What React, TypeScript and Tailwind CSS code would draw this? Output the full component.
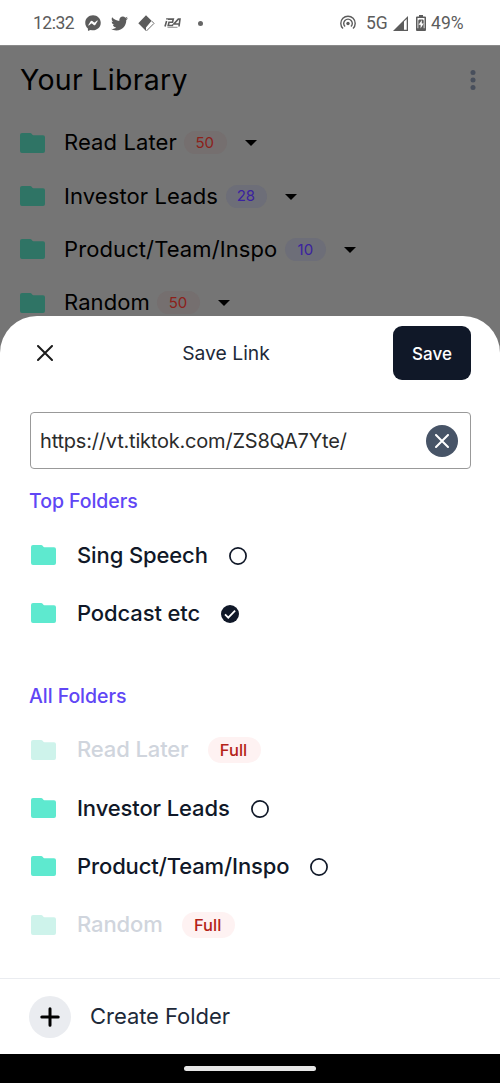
import { FaFacebookMessenger, FaTwitter } from 'react-icons/fa';

const libraryFolders = [
  { name: 'Read Later', count: 50, full: true },
  { name: 'Investor Leads', count: 28, full: false },
  { name: 'Product/Team/Inspo', count: 10, full: false },
  { name: 'Random', count: 50, full: true },
];

const topFolders = [
  { name: 'Sing Speech', state: 'empty' },
  { name: 'Podcast etc', state: 'checked' },
];

const allFolders = [
  { name: 'Read Later', state: 'full' },
  { name: 'Investor Leads', state: 'empty' },
  { name: 'Product/Team/Inspo', state: 'empty' },
  { name: 'Random', state: 'full' },
];

function FolderIcon({ className }: { className: string }) {
  return (
    <svg width="25" height="20" viewBox="0 0 25 20" fill="currentColor" className={className}>
      <path d="M2 0h8.2c.6 0 .9.2 1.2.6l.8 1c.3.4.6.6 1.2.6H23a2 2 0 0 1 2 2V18a2 2 0 0 1-2 2H2a2 2 0 0 1-2-2V2a2 2 0 0 1 2-2z" />
    </svg>
  );
}

function StatusBar() {
  return (
    <div className="flex h-[45px] items-center bg-white pt-px pl-[33px] pr-[34px] font-[Roboto,sans-serif] text-[17.5px] text-[#5c5c5c]">
      <span className="w-[52px] tracking-[-0.5px]">12:32</span>
      <FaFacebookMessenger size={16} />
      <FaTwitter size={17} className="ml-[10px]" />
      <svg width="17" height="17" viewBox="0 0 17 17" className="ml-[10px]">
        <path d="M8 0.3 13.6 5.8 8 12.4V16L0.3 8.3z" fill="currentColor" />
        <path d="M13.8 6.1 16 8.4 8.4 16" fill="none" stroke="currentColor" strokeWidth="0.9" />
      </svg>
      <svg width="17" height="11" viewBox="0 0 17 11" className="ml-[9px]" fill="none" stroke="currentColor" strokeWidth="1.6">
        <path d="M2.6 3 1 8.5M3.2 0.2 2.9 1.7M4 1.1h5.3L8.5 4.2H5L4.2 7.5h5M15 8.5 16 1.1h-1.7L9.8 6h6" />
        <path d="M3.5 9.3h10" strokeWidth="0.7" />
      </svg>
      <span className="ml-[17px] size-[5px] rounded-full bg-[#666666]" />
      <div className="flex-1" />
      <svg width="16" height="16" viewBox="0 0 16 16" fill="none" stroke="currentColor" strokeWidth="1.4">
        <circle cx="8" cy="8.5" r="1.7" fill="currentColor" stroke="none" />
        <path d="M3 13.6A7.2 7.2 0 1 1 13 13.6M5.1 11.6A4.3 4.3 0 1 1 10.9 11.6" />
      </svg>
      <span className="ml-[10px] w-[22px]">5G</span>
      <svg width="15" height="15" viewBox="0 0 15 15" className="ml-[5px]">
        <path d="M15 0v15H0z" fill="currentColor" />
        <path d="M11 5.5 13.7 3v10.7H11z" fill="white" />
      </svg>
      <svg width="10" height="16" viewBox="0 0 10 16" className="ml-[8px]">
        <path d="M3 0h4v1.6h2q1 0 1 1V15q0 1-1 1H1q-1 0-1-1V2.6q0-1 1-1h2z" fill="currentColor" />
        <path d="M1.5 3h7v10.2h-.8V5.5L7 4.5H3l-.7 1v7.7h-.8zM5.8 5 2.6 9.7h2v3.8L7.6 8.6H5.8z" fill="white" />
      </svg>
      <span className="ml-[5px] w-[35px] tracking-[0.1px]">49%</span>
    </div>
  );
}

function LibraryRow({ name, count, full }: { name: string; count: number; full: boolean }) {
  return (
    <div className="flex h-[53.4px] items-center pl-5">
      <FolderIcon className="text-[#2f7465]" />
      <span className="ml-[19px] text-[22px] tracking-[0.1px]">{name}</span>
      <span
        className={
          full
            ? 'ml-[7px] flex h-[23px] w-[43px] items-center justify-center rounded-full bg-[#756f6f] pt-px pr-px text-[15px] text-[#8c211a]'
            : 'ml-[8px] flex h-[23px] w-[41px] items-center justify-center rounded-full bg-[#6d6e78] pt-px pr-px text-[15px] text-[#3a22a0]'
        }
      >
        {count}
      </span>
      <svg width="12" height="6" viewBox="0 0 12 6" className="ml-[18px] mt-px">
        <path d="M0 0h12L6 6z" fill="black" />
      </svg>
    </div>
  );
}

function Status({ state }: { state: string }) {
  if (state === 'full') {
    return (
      <span className="ml-[19px] mt-px flex h-[26px] w-[53px] items-center justify-center rounded-full bg-[#fef2f2] pt-px pr-px text-[16.5px] font-medium text-[#b42318]">
        Full
      </span>
    );
  }
  if (state === 'checked') {
    return (
      <svg width="18" height="18" viewBox="0 0 18 18" className="ml-[21px] mt-px">
        <circle cx="9" cy="9" r="9" fill="#101828" />
        <path d="m4 9.3 3.3 3.4 6.8-7" fill="none" stroke="white" strokeWidth="1.8" />
      </svg>
    );
  }
  return (
    <svg width="18" height="18" viewBox="0 0 18 18" className="ml-[21px] mt-px" fill="none" stroke="#101828" strokeWidth="1.7">
      <circle cx="9" cy="9" r="8.1" />
    </svg>
  );
}

function FolderRow({ name, state }: { name: string; state: string }) {
  const disabled = state === 'full';
  return (
    <div className="flex h-[58.3px] items-center pl-[31px]">
      <FolderIcon className={disabled ? 'text-[#cef3eb]' : 'text-[#5ee9cf]'} />
      <span
        className={
          disabled
            ? 'ml-[21px] text-[22px] font-medium tracking-[-0.12px] text-[#d0d5dd]'
            : 'ml-[21px] text-[22px] font-medium tracking-[-0.12px] text-[#101828]'
        }
      >
        {name}
      </span>
      <Status state={state} />
    </div>
  );
}

export default function App() {
  return (
    <div className="flex h-[1083px] w-[500px] flex-col overflow-hidden bg-white font-['Inter',sans-serif] whitespace-nowrap">
      <StatusBar />
      <div className="h-[321px] shrink-0 overflow-hidden border-t border-[#8a8a8a] bg-[#757575] text-black">
        <div className="flex h-[70px] items-center justify-between pb-[2px] pl-5 pr-[24px]">
          <h1 className="text-[28.5px] tracking-[0.3px]">Your Library</h1>
          <svg width="6" height="20" viewBox="0 0 6 20" fill="#484f5c">
            <circle cx="3" cy="2.6" r="2.5" />
            <circle cx="3" cy="10" r="2.5" />
            <circle cx="3" cy="17.4" r="2.5" />
          </svg>
        </div>
        {libraryFolders.map((folder) => (
          <LibraryRow key={folder.name} {...folder} />
        ))}
      </div>
      <div className="relative -mt-[50px] flex h-[738px] shrink-0 flex-col rounded-t-[37px] bg-white">
        <div className="flex h-[73px] items-center pl-[37px] pr-[29px]">
          <svg width="16" height="16" viewBox="0 0 16 16" fill="none" stroke="#1c1c1c" strokeWidth="2" strokeLinecap="round">
            <path d="m1 1 14 14M15 1 1 15" />
          </svg>
          <h2 className="flex-1 pt-[2px] pl-[6px] text-center text-[19.3px] text-[#1d2939]">Save Link</h2>
          <button className="h-[54px] w-[78px] rounded-[9px] bg-[#101828] pt-[4px] text-[17px] font-medium text-white">Save</button>
        </div>
        <div className="ml-[30px] mr-[29px] mt-[23px] flex h-[57px] items-center justify-between rounded-[4px] border border-[#999999] pl-[9px] pr-[12px]">
          <span className="text-[20px] tracking-[-0.2px] text-[#2b2b2b]">https://vt.tiktok.com/ZS8QA7Yte/</span>
          <span className="flex size-8 items-center justify-center rounded-full bg-[#475467]">
            <svg width="14" height="14" viewBox="0 0 14 14" fill="none" stroke="white" strokeWidth="2" strokeLinecap="round">
              <path d="m1 1 12 12M13 1 1 13" />
            </svg>
          </span>
        </div>
        <h3 className="mt-[17px] pl-[29px] text-[19.5px] leading-[30px] font-medium tracking-[-0.05px] text-[#6046f5]">Top Folders</h3>
        <div className="mt-[10px]">
          {topFolders.map((folder) => (
            <FolderRow key={folder.name} {...folder} />
          ))}
        </div>
        <h3 className="mt-[38px] pl-[29px] text-[19.5px] leading-[30px] font-medium tracking-[-0.05px] text-[#6046f5]">All Folders</h3>
        <div className="mt-[10px]">
          {allFolders.map((folder) => (
            <FolderRow key={folder.name} {...folder} />
          ))}
        </div>
        <div className="mt-auto flex h-[76px] items-center border-t border-[#eaecf0] pl-[29px]">
          <span className="flex size-[42px] items-center justify-center rounded-full bg-[#eaecf0]">
            <svg width="20" height="20" viewBox="0 0 20 20" fill="none" stroke="black" strokeWidth="3" strokeLinecap="round">
              <path d="M10 1.8v16.4M1.8 10h16.4" />
            </svg>
          </span>
          <span className="ml-[19px] text-[22px] tracking-[-0.05px] text-[#1d2939]">Create Folder</span>
        </div>
      </div>
      <div className="flex flex-1 items-center justify-center bg-black">
        <div className="h-[5px] w-[132px] rounded-full bg-[#e6e6e6]" />
      </div>
    </div>
  );
}
